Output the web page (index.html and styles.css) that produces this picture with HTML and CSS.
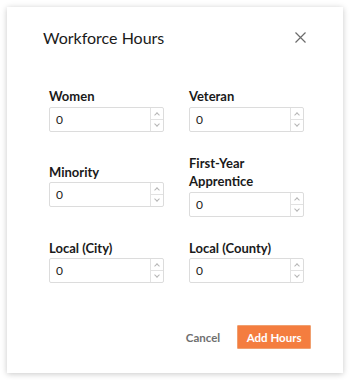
FILE: index.html
```html
<!DOCTYPE html>
<html lang="en">
<head>
    <meta charset="UTF-8">
    <meta name="viewport" content="width=device-width, initial-scale=1.0">
    <title>Workforce Hours</title>
    <link rel="stylesheet" href="styles.css">
</head>
<body>
    <div class="modal">
        <div class="modal-header">
            <h2>Workforce Hours</h2>
            <svg class="close" width="11" height="11" viewBox="0 0 11 11">
                <path d="M0.5 0.5 L10.5 10.5 M10.5 0.5 L0.5 10.5" stroke="#6b6b6b" stroke-width="1.2" fill="none"/>
            </svg>
        </div>

        <div class="fields">
            <div class="field">
                <label>Women</label>
                <div class="number-input">
                    <span class="value">0</span>
                    <span class="spinner"><span class="up"></span><span class="down"></span></span>
                </div>
            </div>
            <div class="field">
                <label>Veteran</label>
                <div class="number-input">
                    <span class="value">0</span>
                    <span class="spinner"><span class="up"></span><span class="down"></span></span>
                </div>
            </div>
            <div class="field">
                <label>Minority</label>
                <div class="number-input">
                    <span class="value">0</span>
                    <span class="spinner"><span class="up"></span><span class="down"></span></span>
                </div>
            </div>
            <div class="field">
                <label>First-Year<br>Apprentice</label>
                <div class="number-input">
                    <span class="value">0</span>
                    <span class="spinner"><span class="up"></span><span class="down"></span></span>
                </div>
            </div>
            <div class="field">
                <label>Local (City)</label>
                <div class="number-input">
                    <span class="value">0</span>
                    <span class="spinner"><span class="up"></span><span class="down"></span></span>
                </div>
            </div>
            <div class="field">
                <label>Local (County)</label>
                <div class="number-input">
                    <span class="value">0</span>
                    <span class="spinner"><span class="up"></span><span class="down"></span></span>
                </div>
            </div>
        </div>

        <div class="actions">
            <button class="btn-cancel">Cancel</button>
            <button class="btn-primary">Add Hours</button>
        </div>
    </div>
</body>
</html>
```

FILE: styles.css
```css
body {
    margin: 0;
    padding: 7px;
    background: #fff;
    font-family: Lato, 'Open Sans', sans-serif;
    color: #1a1a1a;
}

.modal {
    width: 336px;
    height: 366px;
    box-sizing: border-box;
    background: #fff;
    box-shadow: 0 1px 6px rgba(0, 0, 0, 0.22);
    padding: 15px 36px 0 36px;
}

.modal-header {
    display: flex;
    justify-content: space-between;
    align-items: center;
    height: 30px;
}

.modal-header h2 {
    margin: 0;
    font-size: 16px;
    font-weight: 400;
    color: #1a1a1a;
}

.close {
    margin-right: 1px;
}

.fields {
    display: grid;
    grid-template-columns: 115px 115px;
    column-gap: 25px;
    row-gap: 22px;
    align-items: center;
    margin-top: 35px;
    padding-left: 6px;
}

.field label {
    display: block;
    font-size: 13px;
    font-weight: 700;
    line-height: 18.5px;
    margin-bottom: 1px;
    color: #1a1a1a;
}

.number-input {
    display: flex;
    height: 25px;
    box-sizing: border-box;
    border: 1px solid #dcdcdc;
    border-radius: 2px;
    background: #fff;
}

.number-input .value {
    flex: 1;
    font-size: 12px;
    line-height: 23px;
    padding-left: 6px;
    color: #222;
}

.spinner {
    width: 12px;
    display: flex;
    flex-direction: column;
    border-left: 1px solid #e2e2e2;
}

.spinner span {
    flex: 1;
    position: relative;
}

.spinner .up {
    border-bottom: 1px solid #e2e2e2;
}

.spinner span::after {
    content: '';
    position: absolute;
    left: 4px;
    width: 3px;
    height: 3px;
    border-left: 1px solid #b5b5b5;
    border-top: 1px solid #b5b5b5;
}

.spinner .up::after {
    top: 5px;
    transform: rotate(45deg);
}

.spinner .down::after {
    top: 2px;
    transform: rotate(225deg);
}

.actions {
    display: flex;
    justify-content: flex-end;
    align-items: center;
    gap: 17px;
    margin-top: 42px;
    margin-right: -4px;
}

.actions button {
    font-family: Lato, 'Open Sans', sans-serif;
    font-size: 11.5px;
    font-weight: 700;
    border: none;
    cursor: pointer;
}

.btn-cancel {
    background: none;
    color: #6f6f6f;
    padding: 0;
}

.btn-primary {
    background: #f47d3f;
    color: #fff;
    height: 24px;
    padding: 0 8.5px;
    border-radius: 1px;
    border: 1px solid #f0a070 !important;
}
```
